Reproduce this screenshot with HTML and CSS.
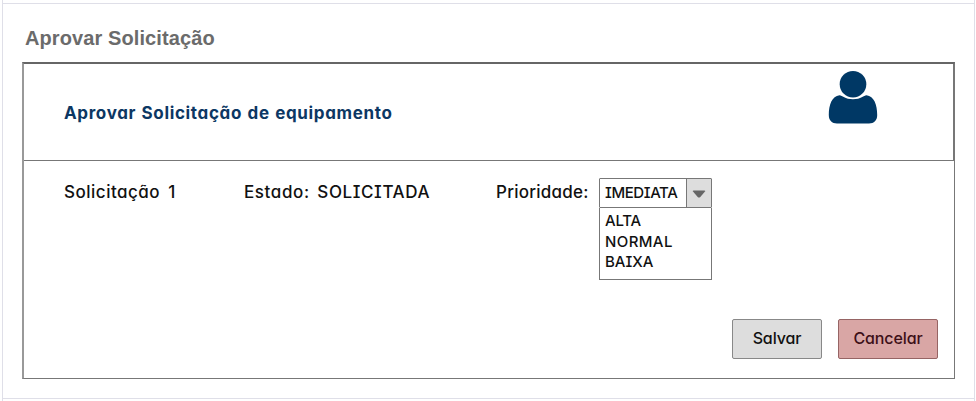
FILE: index.html
```html
<!DOCTYPE html>
<html lang="pt-BR">
<head>
<meta charset="utf-8">
<title>Aprovar Solicitação</title>
<link rel="stylesheet" href="styles.css">
</head>
<body>
<main class="page">
  <h1 class="page-title">Aprovar Solicitação</h1>
  <section class="panel">
    <header class="panel-header">
      <h2 class="panel-title">Aprovar Solicitação de equipamento</h2>
      <svg class="user-icon" width="50" height="54" viewBox="0 0 50 54" aria-hidden="true">
        <path d="M11.500 25.300C4 26 .8 35 .8 45C.8 50.500 4 53.500 9 53.500H41C46 53.500 49.200 50.500 49.200 45C49.200 35 46 26 38.500 25.300C36 25.200 33 29.300 25 29.300S14 25.200 11.500 25.300Z"/>
        <circle cx="25" cy="14.200" r="13.300"/>
      </svg>
    </header>
    <div class="details">
      <span class="request">Solicitação 1</span>
      <span class="state">Estado: SOLICITADA</span>
      <span class="priority">Prioridade:</span>
      <div class="combo">
        <div class="combo-field">
          <span class="combo-value">IMEDIATA</span>
          <span class="combo-arrow"><svg width="14" height="8" viewBox="0 0 14 8"><path d="M1.500 .5H12.500Q13.800 .5 13 1.600L8.300 7Q7 8.200 5.700 7L1 1.600Q.2 .5 1.500 .5Z"/></svg></span>
        </div>
        <ul class="combo-list">
          <li class="alta">ALTA</li>
          <li class="normal">NORMAL</li>
          <li class="baixa">BAIXA</li>
        </ul>
      </div>
    </div>
    <footer class="actions">
      <button class="button save">Salvar</button>
      <button class="button cancel">Cancelar</button>
    </footer>
  </section>
</main>
</body>
</html>
```
FILE: styles.css
```css
* { box-sizing: border-box; }
body {
  margin: 0;
  height: 401px;
  overflow: hidden;
  background: #fff;
  color: #111;
  font: 500 17px/20px Inter, sans-serif;
  font-feature-settings: "cv11", "cv08";
}
.page {
  height: 401px;
  margin: 0 1px 0 2px;
  border: solid #dfdfe8;
  border-width: 0 1px;
  padding-top: 3px;
}
.page::before, .page::after {
  content: "";
  display: block;
  height: 1px;
  background: #dfdfe8;
}
.page::after { margin-top: 19px; }
.page-title {
  margin: 22px 0 0 22px;
  height: 36px;
  font: bold 20px/24px "Liberation Sans", sans-serif;
  letter-spacing: .1px;
  color: #6b6b6b;
}
.panel {
  width: 933px;
  height: 317px;
  margin-left: 19px;
  border: 1px solid #777;
  border-top: 2px solid #666;
  border-left: 2px solid #999;
}
.panel-header {
  display: flex;
  height: 97px;
  border-bottom: 1px solid #777;
  border-right: 1px solid #777;
  padding-left: 40px;
}
.panel-title {
  margin: 39px 0 0;
  width: 763.5px;
  font: 700 17px/20px Inter, sans-serif;
  font-feature-settings: "cv11", "cv08";
  letter-spacing: .65px;
  word-spacing: .8px;
  color: #0c3763;
}
.user-icon { margin-top: 6px; fill: #003865; }
.details {
  display: grid;
  grid-template-columns: 180px 252px 103px 113px;
  height: 158px;
  padding: 17px 0 0 40px;
  white-space: nowrap;
}
.request, .state, .priority { padding-top: 4px; }
.request { letter-spacing: .5px; word-spacing: 3px; }
.state { letter-spacing: .6px; word-spacing: 2.5px; }
.priority { letter-spacing: .25px; }
.combo { font-size: 15px; }
.combo-field {
  display: flex;
  height: 30px;
  border: 1px solid #777;
  border-radius: 1px;
}
.combo-value { width: 86px; padding: 4px 0 0 5px; letter-spacing: -.4px; }
.combo-arrow {
  display: flex;
  flex: 1;
  align-items: center;
  justify-content: center;
  padding-top: 2px;
  border-left: 1px solid #777;
  background: #ddd;
  fill: #666;
}
.combo-list {
  list-style: none;
  margin: 0;
  height: 72px;
  padding: 3px 0 0 5px;
  border: 1px solid #777;
  border-top: 0;
}
.combo-list li { height: 20.5px; }
.alta { letter-spacing: -.2px; }
.normal { letter-spacing: .4px; }
.baixa { letter-spacing: 0; }
.actions { display: flex; gap: 16px; padding-left: 708px; }
.button {
  height: 40px;
  padding: 0 0 3px;
  border: 1px solid #888;
  border-radius: 2px;
  background: #ddd;
  color: #111;
  font: 500 16px/20px Inter, sans-serif;
  font-feature-settings: "cv11", "cv08";
  letter-spacing: -.1px;
}
.save { width: 90px; }
.cancel { width: 100px; border-color: #966464; background: #d9a6a5; color: #3d1018; }
```
